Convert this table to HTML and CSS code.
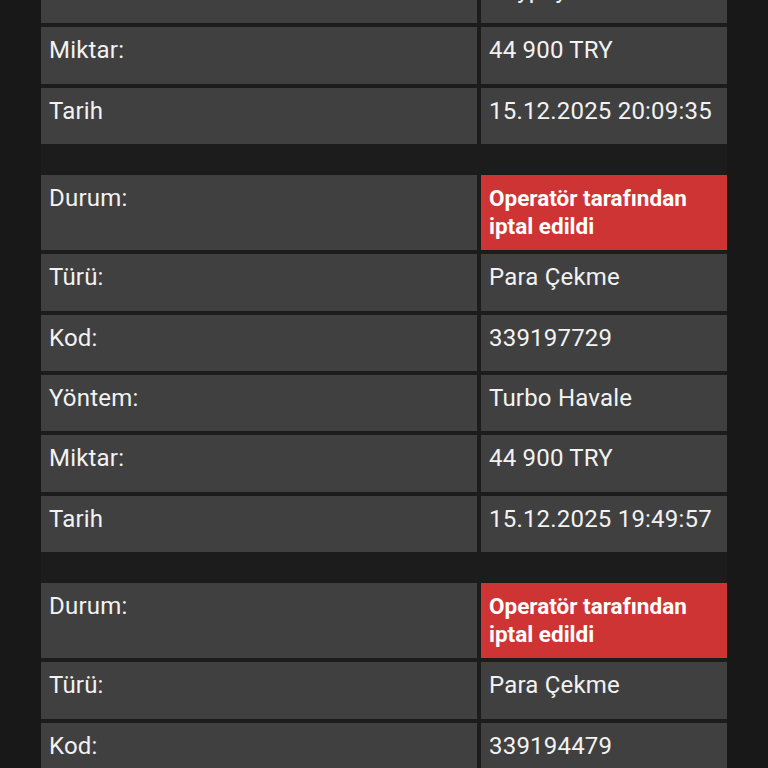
FILE: index.html
```html
<!DOCTYPE html>
<html lang="tr">
<head>
<meta charset="utf-8">
<link rel="stylesheet" href="styles.css">
</head>
<body>
<div class="page">
  <div class="list">
    <div class="tx">
      <div class="row"><div class="cell">Yöntem:</div><div class="cell">Paypay</div></div>
      <div class="row"><div class="cell">Miktar:</div><div class="cell">44 900 TRY</div></div>
      <div class="row"><div class="cell">Tarih</div><div class="cell">15.12.2025 20:09:35</div></div>
    </div>
    <div class="tx">
      <div class="row"><div class="cell">Durum:</div><div class="cell status">Operatör tarafından iptal edildi</div></div>
      <div class="row"><div class="cell">Türü:</div><div class="cell">Para Çekme</div></div>
      <div class="row"><div class="cell">Kod:</div><div class="cell">339197729</div></div>
      <div class="row"><div class="cell">Yöntem:</div><div class="cell">Turbo Havale</div></div>
      <div class="row"><div class="cell">Miktar:</div><div class="cell">44 900 TRY</div></div>
      <div class="row"><div class="cell">Tarih</div><div class="cell">15.12.2025 19:49:57</div></div>
    </div>
    <div class="tx">
      <div class="row"><div class="cell">Durum:</div><div class="cell status">Operatör tarafından iptal edildi</div></div>
      <div class="row"><div class="cell">Türü:</div><div class="cell">Para Çekme</div></div>
      <div class="row"><div class="cell">Kod:</div><div class="cell">339194479</div></div>
      <div class="row"><div class="cell">Yöntem:</div><div class="cell">Turbo Havale</div></div>
    </div>
  </div>
</div>
</body>
</html>
```
FILE: styles.css
```css
html, body {
  margin: 0;
  padding: 0;
  background: #181818;
  height: 100%;
  overflow: hidden;
}
body {
  font-family: Roboto, "Noto Sans", sans-serif;
  font-size: 24px;
  letter-spacing: 0.2px;
  color: #f2f2f2;
}
.page {
  margin: 0 41px;
  background: #1c1c1c;
  min-height: 100%;
}
.list {
  display: flex;
  flex-direction: column;
  gap: 31px;
  margin-top: -33px;
}
.tx {
  display: flex;
  flex-direction: column;
  gap: 4px;
}
.row {
  display: grid;
  grid-template-columns: 436px 246px;
  gap: 4px;
}
.cell {
  background: #404040;
  box-sizing: border-box;
  min-height: 56.4px;
  padding: 9px 8px 10px;
  line-height: 28px;
}
.status {
  background: #cf3434;
  color: #ffffff;
  font-weight: 700;
  font-size: 22.5px;
  letter-spacing: 0;
}
```
